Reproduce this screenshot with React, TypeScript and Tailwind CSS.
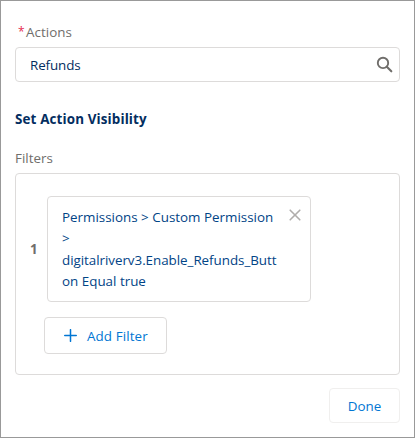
import React from "react";

function SearchIcon() {
  return (
    <svg width="17" height="17" viewBox="0 0 17 17" fill="none" stroke="#706e6b" className="shrink-0">
      <circle cx="7" cy="6.9" r="5.2" strokeWidth="1.9" />
      <path d="M10.8 10.8 15.3 15.3" strokeWidth="2.1" strokeLinecap="round" />
    </svg>
  );
}

function CloseIcon() {
  return (
    <svg width="12" height="12" viewBox="0 0 12 12" fill="none" stroke="#b0adab" strokeWidth="1.6" strokeLinecap="round" className="shrink-0">
      <path d="M1.2 1.2 10.8 10.8M10.8 1.2 1.2 10.8" />
    </svg>
  );
}

function PlusIcon() {
  return (
    <svg width="13" height="13" viewBox="0 0 13 13" fill="none" stroke="#0176d3" strokeWidth="1.5" strokeLinecap="round" className="shrink-0">
      <path d="M6.5 0.7V12.3M0.7 6.5H12.3" />
    </svg>
  );
}

export default function App() {
  return (
    <div className="flex h-[438px] w-[415px] flex-col border border-[#999999] bg-white px-[14px] font-['Open_Sans','Noto_Sans',sans-serif] text-[13.4px] whitespace-nowrap text-[#706e6b]">
      <label className="mt-[21px] flex h-5 items-center pl-[3px] leading-5">
        <span className="w-2 text-[12px] text-[#e52b50]">*</span>
        <span className="tracking-[0.05px]">Actions</span>
      </label>
      <div className="mt-[5px] flex h-[35px] items-center justify-between rounded-[4px] border border-[#dddbda] pr-[6px] pl-[14px]">
        <span className="mt-px tracking-[-0.1px] text-[#032d60]">Refunds</span>
        <SearchIcon />
      </div>
      <h2 className="mt-[27px] h-5 text-[13.4px] leading-5 font-bold tracking-[0.14px] text-[#032d60]">
        Set Action Visibility
      </h2>
      <div className="mt-[19px] h-5 leading-5">Filters</div>
      <section className="mt-[5px] h-[202px] rounded-[4px] border border-[#dddbda] pt-[22px]">
        <div className="flex items-center">
          <span className="w-[31px] pl-[14px] font-bold">1</span>
          <div className="flex h-[106px] w-[264px] items-start justify-between rounded-[4px] border border-[#dddbda] pt-[10px] pr-[9px] pl-[14px]">
            <p className="flex flex-col items-start leading-[21.4px] text-[#014486]">
              <span>Permissions &gt; Custom Permission</span>
              <span>&gt;</span>
              <span className="tracking-[-0.04px]">digitalriverv3.Enable_Refunds_Butt</span>
              <span>on Equal true</span>
            </p>
            <div className="mt-[2px] -ml-4">
              <CloseIcon />
            </div>
          </div>
        </div>
        <button className="mt-[15px] ml-[28px] flex h-[37px] w-[123px] items-center rounded-[4px] border border-[#dddbda] pl-[19px] text-[#0176d3]">
          <PlusIcon />
          <span className="mt-[2px] ml-[10px] tracking-[0.1px]">Add Filter</span>
        </button>
      </section>
      <button className="mt-[13px] flex h-[35px] w-[71px] items-center justify-center self-end rounded-[4px] border border-[#f0efee] pt-[2px] text-[#0176d3]">
        Done
      </button>
    </div>
  );
}
